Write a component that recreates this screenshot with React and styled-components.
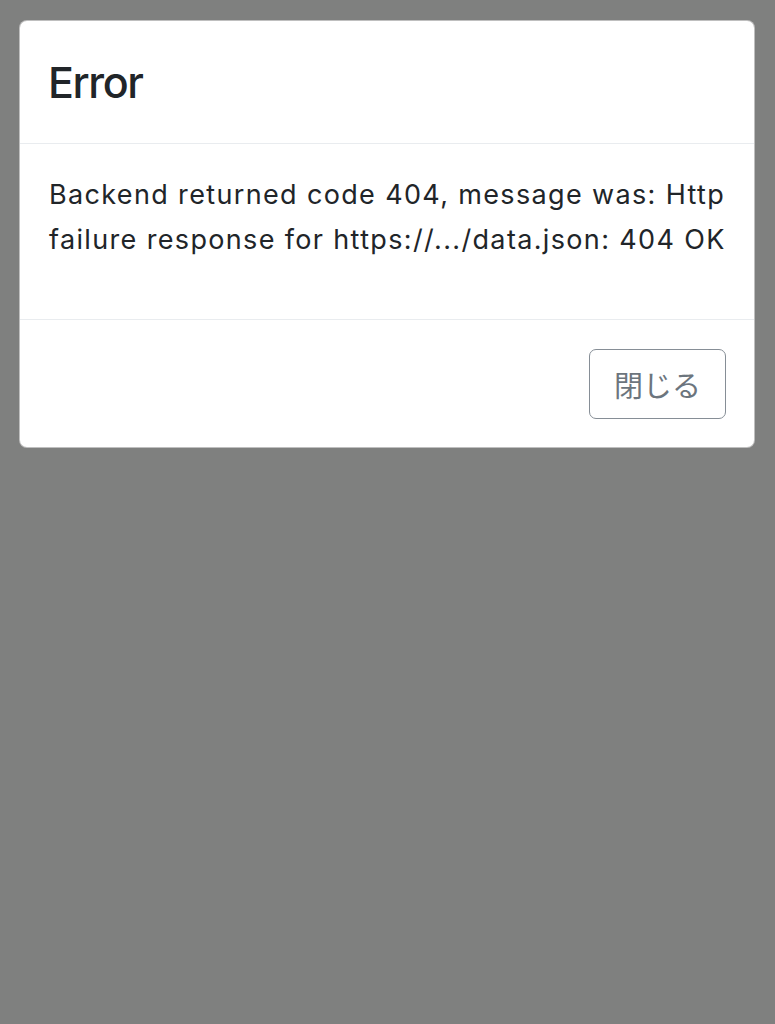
import React from "react";
import styled, { createGlobalStyle } from "styled-components";

const Global = createGlobalStyle`
  html, body { margin: 0; padding: 0; background: #7f807f; }
  body { font-family: Inter, "Noto Sans CJK JP", sans-serif; color: #212529; }
`;

const Backdrop = styled.div`
  min-height: 1024px;
  padding: 20px 20px 0 19px;
  box-sizing: border-box;
`;

const Modal = styled.div`
  background: #fff;
  border: 1px solid rgba(0, 0, 0, 0.25);
  border-radius: 8px;
  display: flex;
  flex-direction: column;
`;

const Header = styled.div`
  padding: 28px 28px;
  border-bottom: 1px solid #e9ecef;
`;

const Title = styled.h4`
  margin: 0;
  font-size: 43px;
  font-weight: 500;
  line-height: 66px;
  letter-spacing: -1.4px;
`;

const Body = styled.div`
  padding: 28px 14px 0 29px;
  height: 176px;
  box-sizing: border-box;
  border-bottom: 1px solid #e9ecef;
`;

const Message = styled.p`
  margin: 0;
  font-size: 27px;
  line-height: 45px;
  letter-spacing: 1.35px;
`;

const Footer = styled.div`
  display: flex;
  justify-content: flex-end;
  padding: 29px 28px 28px;
`;

const Button = styled.button`
  font-family: Inter, "Noto Sans CJK JP", sans-serif;
  font-size: 29px;
  color: #6c757d;
  background: transparent;
  border: 1.5px solid #868e96;
  border-radius: 7px;
  width: 137px;
  height: 70px;
  padding: 0;
  display: flex;
  align-items: center;
  justify-content: center;
`;

export default function App() {
  return (
    <>
      <Global />
      <Backdrop>
        <Modal>
          <Header>
            <Title>Error</Title>
          </Header>
          <Body>
            <Message>
              Backend returned code 404, message was: Http failure response for https://.../data.json: 404 OK
            </Message>
          </Body>
          <Footer>
            <Button>閉じる</Button>
          </Footer>
        </Modal>
      </Backdrop>
    </>
  );
}
